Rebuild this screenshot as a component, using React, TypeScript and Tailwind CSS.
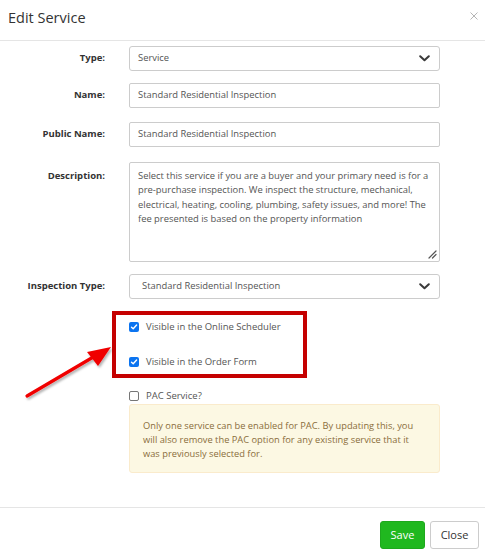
import React from 'react';

const font = { fontFamily: '"Open Sans", "Noto Sans", Arial, sans-serif' };

function Chevron() {
  return (
    <svg width="11" height="7" viewBox="0 0 11 7" className="shrink-0">
      <polyline points="1.2,1.2 5.5,5.3 9.8,1.2" fill="none" stroke="#3a3a3a" strokeWidth="2" strokeLinecap="round" strokeLinejoin="round" />
    </svg>
  );
}

function Check({ checked }: { checked: boolean }) {
  if (!checked) {
    return <span className="block w-[10px] h-[10px] rounded-[2px] border border-[#767676] bg-white shrink-0" />;
  }
  return (
    <span className="flex w-[10px] h-[10px] rounded-[2px] bg-[#0b74f0] items-center justify-center shrink-0">
      <svg width="8" height="8" viewBox="0 0 8 8">
        <polyline points="1.5,4.2 3.2,5.8 6.6,2" fill="none" stroke="#fff" strokeWidth="1.4" strokeLinecap="round" strokeLinejoin="round" />
      </svg>
    </span>
  );
}

function Row({ label, children, top, labelTop }: { label: string; children: React.ReactNode; top: string; labelTop?: boolean }) {
  return (
    <div className={`flex ${labelTop ? 'items-start' : 'items-center'} ${top}`}>
      <label className={`w-[105px] text-right text-[9.5px] font-bold text-[#333] ${labelTop ? 'pt-[7px] leading-[14px]' : ''}`}>{label}</label>
      <div className="ml-[24px] w-[311px]">{children}</div>
    </div>
  );
}

export default function App() {
  return (
    <div className="relative w-[485px] h-[556px] bg-white overflow-hidden text-[#555]" style={font}>
      <div className="h-[41px] border-b border-[#e5e5e5] flex items-start justify-between">
        <h4 className="ml-[8px] mt-[8px] text-[14.5px] leading-[20px] text-[#333]">Edit Service</h4>
        <button className="mr-[7px] mt-[12px] p-0">
          <svg width="8" height="8" viewBox="0 0 8 8">
            <path d="M0.5 0.5 L7.5 7.5 M7.5 0.5 L0.5 7.5" stroke="#b5b5b5" strokeWidth="1" />
          </svg>
        </button>
      </div>

      <div className="flex flex-col">
        <Row label="Type:" top="mt-[5px]">
          <div className="h-[25px] border border-[#ccc] rounded-[3px] flex items-center justify-between pl-[8px] pr-[9px] text-[9.4px]">
            <span>Service</span>
            <Chevron />
          </div>
        </Row>
        <Row label="Name:" top="mt-[12px]">
          <div className="h-[25px] border border-[#ccc] rounded-[2px] flex items-center pl-[8px] text-[9.4px]">
            Standard Residential Inspection
          </div>
        </Row>
        <Row label="Public Name:" top="mt-[14px]">
          <div className="h-[25px] border border-[#ccc] rounded-[2px] flex items-center pl-[8px] text-[9.4px]">
            Standard Residential Inspection
          </div>
        </Row>
        <Row label="Description:" top="mt-[15px]" labelTop>
          <div className="relative h-[100px] border border-[#ccc] rounded-[2px] pl-[8px] pr-[6px] pt-[6px] text-[9.4px] leading-[14.4px]">
            <span className="block whitespace-nowrap">Select this service if you are a buyer and your primary need is for a</span>
            <span className="block whitespace-nowrap">pre-purchase inspection. We inspect the structure, mechanical,</span>
            <span className="block whitespace-nowrap">electrical, heating, cooling, plumbing, safety issues, and more! The</span>
            <span className="block whitespace-nowrap">fee presented is based on the property information</span>
            <svg width="9" height="9" viewBox="0 0 9 9" className="absolute right-[2px] bottom-[2px]">
              <path d="M1 8 L8 1 M4.5 8 L8 4.5" stroke="#555" strokeWidth="1.2" strokeLinecap="round" />
            </svg>
          </div>
        </Row>
        <Row label="Inspection Type:" top="mt-[12px]">
          <div className="h-[25px] border border-[#ccc] rounded-[3px] flex items-center justify-between pl-[12px] pr-[9px] text-[9.4px]">
            <span>Standard Residential Inspection</span>
            <Chevron />
          </div>
        </Row>

        <div className="mt-[12px] ml-[112px] w-[195px] h-[67px] border-[4px] border-[#c50000] pl-[13px] pt-[4px] flex flex-col text-[9.5px]">
          <div className="flex items-center h-[16px] gap-[7px]">
            <Check checked />
            <span>Visible in the Online Scheduler</span>
          </div>
          <div className="flex items-center h-[16px] gap-[7px] mt-[19px]">
            <Check checked />
            <span>Visible in the Order Form</span>
          </div>
        </div>

        <div className="ml-[129px] mt-[11px] flex items-center h-[14px] gap-[7px] text-[9.5px]">
          <Check checked={false} />
          <span>PAC Service?</span>
        </div>

        <div className="ml-[129px] mt-[1px] w-[311px] h-[69px] bg-[#fcf8e3] border border-[#faebcc] rounded-[3px] pl-[13px] pt-[14px] text-[9.3px] leading-[14px] text-[#8a6d3b]">
          <span className="block">Only one service can be enabled for PAC. By updating this, you</span>
          <span className="block">will also remove the PAC option for any existing service that it</span>
          <span className="block">was previously selected for.</span>
        </div>

        <div className="mt-[34px] border-t border-[#e5e5e5] flex justify-end gap-[5px] pt-[13px] pr-[6px]">
          <button className="w-[45px] h-[28px] rounded-[3px] bg-[#20b81f] border border-[#1ea81d] text-white text-[11px]">Save</button>
          <button className="w-[49px] h-[28px] rounded-[3px] bg-white border border-[#ccc] text-[#333] text-[11px]">Close</button>
        </div>
      </div>

      <svg className="absolute left-0 top-0 pointer-events-none" width="485" height="556" viewBox="0 0 485 556">
        <defs>
          <filter id="sh" x="-20%" y="-20%" width="140%" height="140%">
            <feDropShadow dx="1.5" dy="2" stdDeviation="1.2" floodColor="#000" floodOpacity="0.3" />
          </filter>
        </defs>
        <g filter="url(#sh)">
          <line x1="27" y1="396" x2="95" y2="356" stroke="#f00000" strokeWidth="3.2" strokeLinecap="round" />
          <polygon points="111,347 87,352 98,366" fill="#f00000" />
        </g>
      </svg>
    </div>
  );
}
